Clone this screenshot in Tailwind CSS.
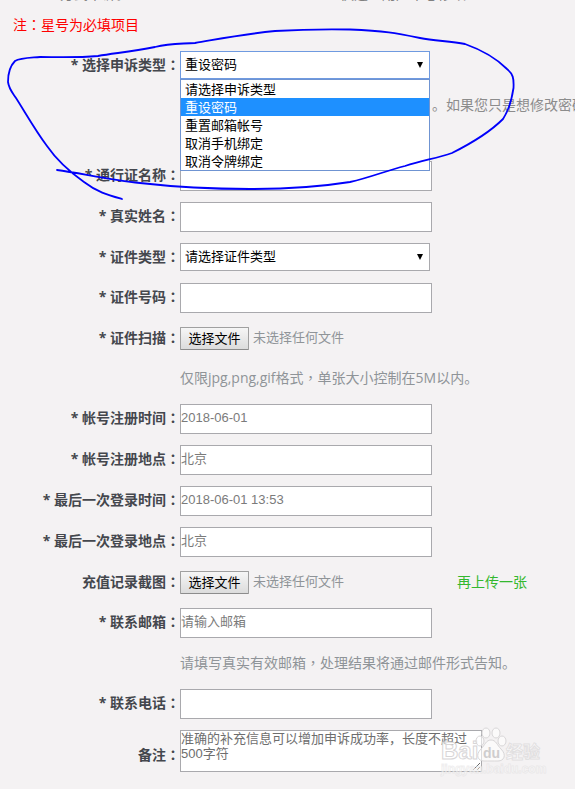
<!DOCTYPE html>
<html lang="zh-CN">
<head>
    <meta charset="UTF-8">
    <meta name="viewport" content="width=device-width, initial-scale=1.0">
    <title>帐号申诉</title>
    <script src="https://cdn.jsdelivr.net/npm/@tailwindcss/browser@4"></script>
    <style>
        body {
            font-family: 'Open Sans', 'Noto Sans CJK SC', sans-serif;
        }

        /* centred full-width colon and comma */
        [lang="zh-TW"] {
            font-family: 'Noto Sans CJK TC', sans-serif;
        }

        input, select, textarea, button {
            font-family: 'Liberation Sans', 'Noto Sans CJK SC', sans-serif;
        }
    </style>
</head>
<body class="relative bg-[#f4f2f3] text-sm text-[#44474d] overflow-x-hidden">

    <!-- end of the intro paragraph -->
    <div class="h-[3px] flex items-end overflow-hidden whitespace-nowrap text-[#808080]">
        <span class="pl-[60px] w-[340px] leading-[18px] shrink-0">方式申诉。</span>
        <span class="leading-[18px]">快速查用户中心修改</span>
    </div>

    <p class="mt-[11px] pl-[13px] leading-5 text-[#ff0000]">注<span lang="zh-TW">：</span>星号为必填项目</p>

    <form class="mt-4 pb-4 flex flex-col gap-[11px]">
        <div class="relative flex items-start h-[29px]">
            <label for="type" class="w-[180px] shrink-0 text-right font-bold leading-[26px]">* 选择申诉类型<span lang="zh-TW">：</span></label>
            <div class="relative w-[250px]">
                <select id="type" class="appearance-none w-full h-7 bg-white border border-[#6f9ae0] pl-1 text-[13px] text-black outline-none">
                    <option>请选择申诉类型</option>
                    <option selected>重设密码</option>
                    <option>重置邮箱帐号</option>
                    <option>取消手机绑定</option>
                    <option>取消令牌绑定</option>
                </select>
                <svg class="absolute right-[7px] top-[11px] w-[6px] h-[6px] pointer-events-none" viewBox="0 0 6 6"><path d="M0 0h6L3 6z"/></svg>
                <ul role="listbox" aria-label="选择申诉类型" class="absolute z-10 top-7 left-0 w-full bg-white border border-[#6f94d2] text-[13px] leading-[18px] text-black">
                    <li role="option" class="pl-1">请选择申诉类型</li>
                    <li role="option" aria-selected="true" class="pl-1 bg-[#1e90ff] text-white">重设密码</li>
                    <li role="option" class="pl-1">重置邮箱帐号</li>
                    <li role="option" class="pl-1">取消手机绑定</li>
                    <li role="option" class="pl-1">取消令牌绑定</li>
                </ul>
            </div>
        </div>
        <p class="h-[59px] pl-[432px] leading-7 whitespace-nowrap overflow-hidden text-[#8c8c8c]">。如果您只是想修改密码</p>
        <div class="flex items-center">
            <label for="passport" class="w-[180px] shrink-0 pb-1 text-right font-bold">* 通行证名称<span lang="zh-TW">：</span></label>
            <input id="passport" type="text" class="w-[252px] h-[30px] bg-white border border-[#a9a9ad] pb-1 text-[13px]">
        </div>
        <div class="flex items-center">
            <label for="name" class="w-[180px] shrink-0 pb-1 text-right font-bold">* 真实姓名<span lang="zh-TW">：</span></label>
            <input id="name" type="text" class="w-[252px] h-[30px] bg-white border border-[#a9a9ad] pb-1 text-[13px]">
        </div>
        <div class="flex items-start h-[29px]">
            <label for="idtype" class="w-[180px] shrink-0 text-right font-bold leading-[26px]">* 证件类型<span lang="zh-TW">：</span></label>
            <div class="relative w-[250px]">
                <select id="idtype" class="appearance-none w-full h-7 bg-white border border-[#a9a9ad] pl-1 text-[13px] text-black">
                    <option>请选择证件类型</option>
                </select>
                <svg class="absolute right-[7px] top-[11px] w-[6px] h-[6px] pointer-events-none" viewBox="0 0 6 6"><path d="M0 0h6L3 6z"/></svg>
            </div>
        </div>
        <div class="flex items-center">
            <label for="idno" class="w-[180px] shrink-0 pb-1 text-right font-bold">* 证件号码<span lang="zh-TW">：</span></label>
            <input id="idno" type="text" class="w-[252px] h-[30px] bg-white border border-[#a9a9ad] pb-1 text-[13px]">
        </div>
        <div class="flex items-center h-[29px]">
            <label for="scan" class="w-[180px] shrink-0 pb-0.5 text-right font-bold">* 证件扫描<span lang="zh-TW">：</span></label>
            <button id="scan" type="button" class="w-[69px] h-[23px] rounded-[1px] border border-[#a0a0a0] border-b-[#8c8c8c] bg-linear-to-b from-[#f6f6f6] to-[#dcdcdc] text-[13px] leading-5 text-black">选择文件</button>
            <span class="pl-1 pb-0.5 text-[13px] text-[#8f9498]">未选择任何文件</span>
        </div>
        <p class="pl-[180px] pb-0.5 leading-[27px] text-[#8f9498]">仅限jpg,png,gif格式<span lang="zh-TW">，</span>单张大小控制在5M以内。</p>
        <div class="flex items-center">
            <label for="regtime" class="w-[180px] shrink-0 pb-1 text-right font-bold">* 帐号注册时间<span lang="zh-TW">：</span></label>
            <input id="regtime" type="text" placeholder="2018-06-01" class="w-[252px] h-[30px] bg-white border border-[#a9a9ad] pb-1 text-[13px] placeholder:text-[#7b7b7b]">
        </div>
        <div class="flex items-center">
            <label for="regplace" class="w-[180px] shrink-0 pb-1 text-right font-bold">* 帐号注册地点<span lang="zh-TW">：</span></label>
            <input id="regplace" type="text" placeholder="北京" class="w-[252px] h-[30px] bg-white border border-[#a9a9ad] pb-1 text-[13px] placeholder:text-[#7b7b7b]">
        </div>
        <div class="flex items-center">
            <label for="lasttime" class="w-[180px] shrink-0 pb-1 text-right font-bold">* 最后一次登录时间<span lang="zh-TW">：</span></label>
            <input id="lasttime" type="text" placeholder="2018-06-01 13:53" class="w-[252px] h-[30px] bg-white border border-[#a9a9ad] pb-1 text-[13px] placeholder:text-[#7b7b7b]">
        </div>
        <div class="flex items-center">
            <label for="lastplace" class="w-[180px] shrink-0 pb-1 text-right font-bold">* 最后一次登录地点<span lang="zh-TW">：</span></label>
            <input id="lastplace" type="text" placeholder="北京" class="w-[252px] h-[30px] bg-white border border-[#a9a9ad] pb-1 text-[13px] placeholder:text-[#7b7b7b]">
        </div>
        <div class="flex items-center h-[29px]">
            <label for="record" class="w-[180px] shrink-0 pb-0.5 text-right font-bold">充值记录截图<span lang="zh-TW">：</span></label>
            <div class="w-[277px] flex items-center">
                <button id="record" type="button" class="w-[69px] h-[23px] rounded-[1px] border border-[#a0a0a0] border-b-[#8c8c8c] bg-linear-to-b from-[#f6f6f6] to-[#dcdcdc] text-[13px] leading-5 text-black">选择文件</button>
                <span class="pl-1 pb-0.5 text-[13px] text-[#8f9498]">未选择任何文件</span>
            </div>
            <a href="#" class="pb-0.5 text-[#33b82e]">再上传一张</a>
        </div>
        <div class="flex items-center">
            <label for="email" class="w-[180px] shrink-0 pb-1 text-right font-bold">* 联系邮箱<span lang="zh-TW">：</span></label>
            <input id="email" type="email" placeholder="请输入邮箱" class="w-[252px] h-[30px] bg-white border border-[#a9a9ad] pb-1 text-[13px] placeholder:text-[#7b7b7b]">
        </div>
        <p class="pl-[180px] pb-0.5 leading-[27px] text-[#8f9498]">请填写真实有效邮箱<span lang="zh-TW">，</span>处理结果将通过邮件形式告知。</p>
        <div class="flex items-center">
            <label for="phone" class="w-[180px] shrink-0 pb-1 text-right font-bold">* 联系电话<span lang="zh-TW">：</span></label>
            <input id="phone" type="tel" class="w-[252px] h-[30px] bg-white border border-[#a9a9ad] pb-1 text-[13px]">
        </div>
        <div class="flex items-start">
            <label for="remark" class="w-[180px] shrink-0 pt-3.5 text-right font-bold">备注<span lang="zh-TW">：</span></label>
            <textarea id="remark" placeholder="准确的补充信息可以增加申诉成功率，长度不超过500字符" class="w-[302px] h-[42px] bg-white border border-[#a9a9ad] text-[13px] leading-[15px] resize placeholder:text-[#6e6e6e]"></textarea>
        </div>
    </form>

    <!-- pen stroke round the first field -->
    <svg class="absolute z-20 left-0 top-0 w-[575px] h-[210px] pointer-events-none" viewBox="0 0 575 210" fill="none" stroke="#0000fb" stroke-width="1.8" stroke-linecap="round" stroke-linejoin="round">
        <path d="M57 170 C80 173 110 180 140 183 C175 187 210 189 250 189 C290 189 325 186 350 182 C372 177 385 171 405 166 C425 160 437 158 452 153 C472 143 490 132 503 119 C509 110 512 98 513.500 88 C514 78 513 74 507 69 C495 57 482 50 465 44 C450 41 435 41 420 38 C395 33 385 31 350 29.500 C320 29 300 29.500 275 31 C245 34 230 37 195 43 C180 44 170 43 155 47 C130 52 115 53 98 56 C75 58 55 57 40 57 C28 58 20 58 15 61 C9 67 8 75 8 82 C9 89 12 92 16 98 C25 112 35 130 47 146 C58 162 70 172 84 182 C97 192 108 195 122 199"/>
    </svg>

    <!-- watermark -->
    <svg class="absolute z-20 left-[436px] top-[720px] w-[120px] h-[60px] pointer-events-none" viewBox="0 0 120 60" fill="#ffffff" fill-opacity="0.6" stroke="#d8d6d7" stroke-width="1">
        <text x="5" y="39" font-family="Liberation Sans" font-weight="700" font-size="24">Bai</text>
        <ellipse cx="44" cy="21" rx="4" ry="5"/>
        <ellipse cx="50" cy="13" rx="4" ry="5"/>
        <ellipse cx="60" cy="13" rx="4" ry="5"/>
        <ellipse cx="66" cy="21" rx="4" ry="5"/>
        <path d="M55 20c5 0 6 5 10 9 6 6 3 12-3 12-4 0-10 0-14 0-6 0-9-6-3-12 4-4 5-9 10-9z"/>
        <text x="47" y="38" font-family="Liberation Sans" font-weight="700" font-size="14" fill="#cfcdce" fill-opacity="1" stroke="none">du</text>
        <text x="70" y="38" font-family="Noto Sans CJK SC" font-weight="700" font-size="17" stroke-opacity="0.7">经验</text>
        <text x="5" y="53" font-family="Liberation Sans" font-weight="700" font-size="12" stroke-opacity="0.4">jingyan.baidu.com</text>
    </svg>
</body>
</html>
